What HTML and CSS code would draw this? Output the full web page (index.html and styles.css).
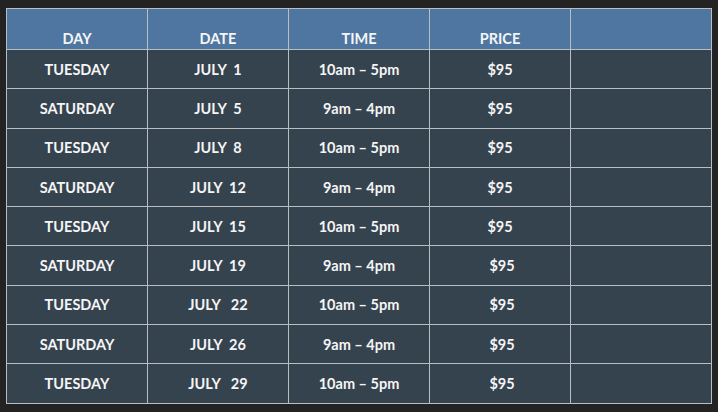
FILE: index.html
```html
<!DOCTYPE html>
<html>
<head>
<meta charset="utf-8">
<link rel="stylesheet" href="styles.css">
</head>
<body>
<div class="frame">
<table class="schedule">
<thead>
<tr><th>DAY</th><th>DATE</th><th>TIME</th><th>PRICE</th><th></th></tr>
</thead>
<tbody>
<tr><td>TUESDAY</td><td>JULY  1</td><td>10am – 5pm</td><td>$95</td><td></td></tr>
<tr><td>SATURDAY</td><td>JULY  5</td><td>9am – 4pm</td><td>$95</td><td></td></tr>
<tr><td>TUESDAY</td><td>JULY  8</td><td>10am – 5pm</td><td>$95</td><td></td></tr>
<tr><td>SATURDAY</td><td>JULY  12</td><td>9am – 4pm</td><td>$95</td><td></td></tr>
<tr><td>TUESDAY</td><td>JULY  15</td><td>10am – 5pm</td><td>$95</td><td></td></tr>
<tr><td>SATURDAY</td><td>JULY  19</td><td>9am – 4pm</td><td class="shift">$95</td><td></td></tr>
<tr><td>TUESDAY</td><td>JULY   22</td><td>10am – 5pm</td><td class="shift">$95</td><td></td></tr>
<tr><td>SATURDAY</td><td>JULY  26</td><td>9am – 4pm</td><td class="shift">$95</td><td></td></tr>
<tr><td>TUESDAY</td><td>JULY   29</td><td>10am – 5pm</td><td class="shift">$95</td><td></td></tr>
</tbody>
</table>
</div>
</body>
</html>
```
FILE: styles.css
```css
html, body {
  margin: 0;
  padding: 0;
  background: #232323;
}
.frame {
  padding: 8px 6px 0 6px;
}
.schedule {
  border-collapse: collapse;
  width: 706px;
  table-layout: fixed;
  font-family: "Lato", "Open Sans", sans-serif;
  font-weight: 700;
  font-size: 14.5px;
  color: #f5f5f5;
  border: 1px solid #9da3a8;
}
.schedule th, .schedule td {
  border: 1px solid #b9bec3;
  text-align: center;
  white-space: pre;
  padding: 0;
}
.schedule th {
  background: #4f76a0;
  height: 39px;
  vertical-align: bottom;
  padding-bottom: 1px;
  line-height: 18px;
}
.schedule td {
  background: #35434f;
  height: 38.3px;
  vertical-align: middle;
}
.schedule td.shift {
  padding-left: 4px;
}
```
